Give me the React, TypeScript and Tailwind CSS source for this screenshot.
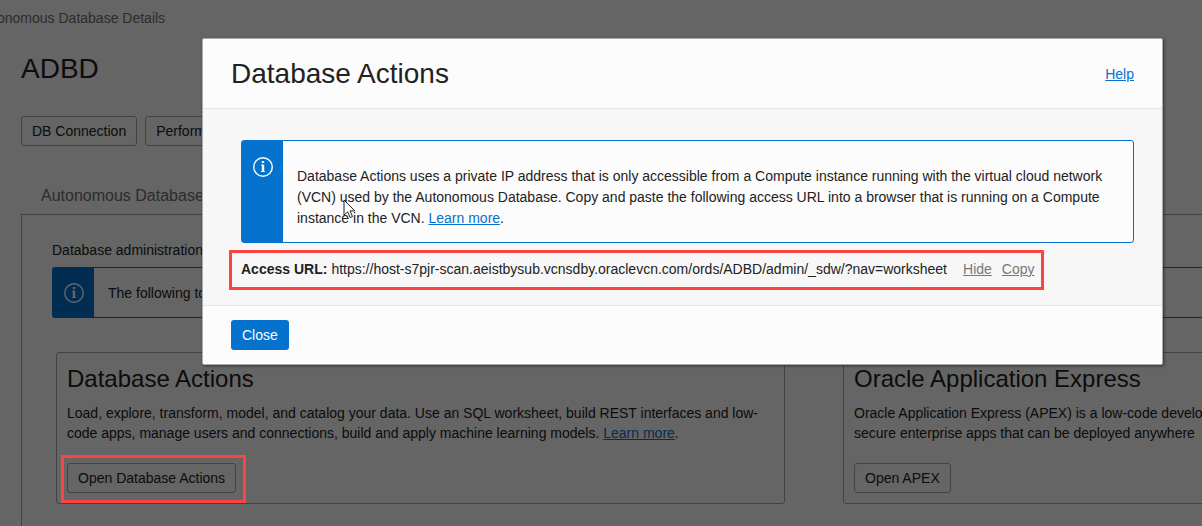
import React from "react";

function InfoIcon() {
  return (
    <svg viewBox="0 0 20 20" className="block size-5 shrink-0" fill="none" aria-hidden="true">
      <circle cx="10" cy="10" r="9.3" stroke="currentColor" strokeWidth="1.4" />
      <rect x="8.8" y="4" width="2.4" height="2" fill="currentColor" />
      <path d="M8 7.5h3.2V14h.6v1H8v-1h.8V8.5H8z" fill="currentColor" />
    </svg>
  );
}

function OutlineButton({ children }: { children: React.ReactNode }) {
  return (
    <button
      type="button"
      className="h-[30px] shrink-0 rounded-[3px] border border-[#a8a8a8] px-2.5 text-sm whitespace-nowrap"
    >
      {children}
    </button>
  );
}

function ToolCard({
  title,
  text,
  action,
}: {
  title: string;
  text: React.ReactNode;
  action: React.ReactNode;
}) {
  return (
    <section className="w-[729px] shrink-0 rounded-[3px] border border-[#a8a8a8] p-2.5">
      <h2 className="text-2xl">{title}</h2>
      <p className="mt-2 text-sm leading-5">{text}</p>
      <div className="mt-5 flex">{action}</div>
    </section>
  );
}

function DetailsPage() {
  return (
    <main className="flex min-h-screen flex-col overflow-hidden bg-[#fcfcfc] pt-2">
      <nav className="-ml-6 text-sm whitespace-nowrap text-[#707070]">Autonomous Database Details</nav>
      <div className="flex grow flex-col pl-[21px]">
        <h1 className="mt-[25px] text-[28px] leading-8">ADBD</h1>
        <div className="mt-[31px] flex gap-2">
          <OutlineButton>DB Connection</OutlineButton>
          <OutlineButton>Performance Hub</OutlineButton>
        </div>
        <div className="mt-[38px] px-5 pb-1.5 text-base whitespace-nowrap text-[#707070]">Autonomous Database</div>
        <div className="grow border-t border-l border-[#a8a8a8] pt-[25px] pb-[22px] pl-[30px]">
          <p className="text-sm">Database administration</p>
          <div className="mt-[7px] flex h-[51px] rounded-l-[3px] border border-r-0 border-[#0572ce]">
            <div className="flex w-[41px] shrink-0 items-center justify-center bg-[#0572ce] text-[#fcfcfc]">
              <InfoIcon />
            </div>
            <p className="flex items-center pl-[14px] text-sm">The following tools</p>
          </div>
          <div className="mt-[34px] ml-1 flex gap-[58px]">
            <ToolCard
              title="Database Actions"
              text={
                <>
                  Load, explore, transform, model, and catalog your data. Use an SQL worksheet, build REST interfaces
                  and low-code apps, manage users and connections, build and apply machine learning models.{" "}
                  <a href="#learn-tools" className="text-[#0572ce] underline">
                    Learn more
                  </a>
                  .
                </>
              }
              action={
                <div className="relative flex">
                  <OutlineButton>Open Database Actions</OutlineButton>
                  <span className="pointer-events-none absolute -top-2 -right-[10px] -bottom-[10px] -left-1.5 z-20 border-3 border-[#ff4343]" />
                </div>
              }
            />
            <ToolCard
              title="Oracle Application Express"
              text={
                <>
                  Oracle Application Express (APEX) is a low-code development
                  <br />
                  secure enterprise apps that can be deployed anywhere
                </>
              }
              action={<OutlineButton>Open APEX</OutlineButton>}
            />
          </div>
        </div>
      </div>
    </main>
  );
}

function Pointer() {
  return (
    <svg viewBox="0 0 13 20" className="absolute top-[58px] left-[101px] h-5 w-[13px]" aria-hidden="true">
      <path
        d="M1 1v15.2l3.6-3.4 2.5 5.7 2.4-1-2.5-5.6h4.8z"
        fill="#fff"
        stroke="#222"
        strokeWidth="1"
      />
    </svg>
  );
}

function AccessDialog() {
  return (
    <div className="absolute inset-0 z-10 bg-black/60 pt-[38px] pr-[39px] pl-[202px]">
      <div
        role="dialog"
        aria-labelledby="dialog-title"
        className="rounded-[2px] border border-[#a5adb5] bg-[#fcfcfc] shadow-[1px_1px_3px_rgba(0,0,0,0.5)]"
      >
        <header className="flex h-[70px] items-center justify-between border-b border-[#e3e3e3] px-7">
          <h2 id="dialog-title" className="text-[28px] leading-8">
            Database Actions
          </h2>
          <a href="#help" className="text-sm text-[#0572ce] underline">
            Help
          </a>
        </header>
        <div className="bg-[#f7f7f7] px-[26px] pt-[31px] pb-[15px]">
          <div className="relative mr-0.5 ml-3 flex rounded-[3px] border border-[#0572ce] bg-[#fcfcfc]">
            <div className="flex w-[41px] shrink-0 justify-center bg-[#0572ce] pt-4 text-[#fcfcfc]">
              <InfoIcon />
            </div>
            <p className="px-[14px] pt-[25px] pb-[13px] text-sm leading-[21px]">
              Database Actions uses a private IP address that is only accessible from a Compute instance running with
              the virtual cloud network (VCN) used by the Autonomous Database. Copy and paste the following access URL
              into a browser that is running on a Compute instance in the VCN.{" "}
              <a href="#learn-access" className="text-[#0572ce] underline">
                Learn more
              </a>
              .
            </p>
            <Pointer />
          </div>
          <div className="mt-[7px] flex h-10 w-fit items-center border-3 border-[#ff4343] pr-1.5 pb-0.5 pl-[9px] text-sm whitespace-nowrap">
            <strong>Access URL:</strong>
            <span className="ml-1">
              https://host-s7pjr-scan.aeistbysub.vcnsdby.oraclevcn.com/ords/ADBD/admin/_sdw/?nav=worksheet
            </span>
            <a href="#hide" className="ml-4 text-[#777] underline">
              Hide
            </a>
            <a href="#copy" className="ml-2.5 text-[#777] underline">
              Copy
            </a>
          </div>
        </div>
        <footer className="flex border-t border-[#e3e3e3] px-7 py-[14px]">
          <button type="button" className="h-[30px] rounded-[3px] bg-[#0572ce] px-[11px] text-sm text-[#fcfcfc]">
            Close
          </button>
        </footer>
      </div>
    </div>
  );
}

export default function App() {
  return (
    <div className="relative overflow-hidden font-['Liberation_Sans',Arial,sans-serif] text-[#222]">
      <DetailsPage />
      <AccessDialog />
    </div>
  );
}
